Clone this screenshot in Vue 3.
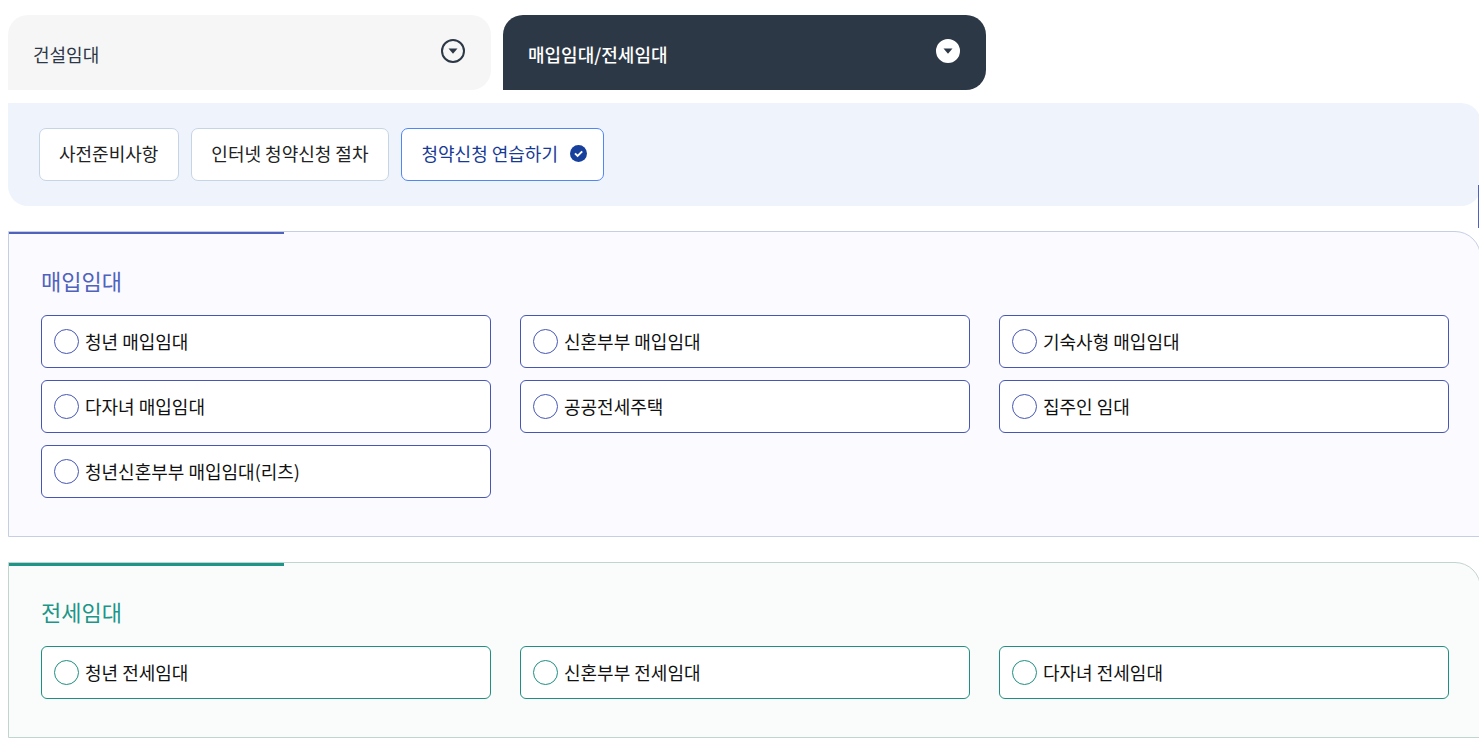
<script setup>
import { ref } from 'vue'

const tabs = [
  { id: 'build', label: '건설임대' },
  { id: 'purchase', label: '매입임대/전세임대' },
]
const activeTab = ref('purchase')

const steps = ['사전준비사항', '인터넷 청약신청 절차', '청약신청 연습하기']
const activeStep = ref(2)

const groups = [
  {
    id: 'purchase',
    title: '매입임대',
    options: [
      '청년 매입임대',
      '신혼부부 매입임대',
      '기숙사형 매입임대',
      '다자녀 매입임대',
      '공공전세주택',
      '집주인 임대',
      '청년신혼부부 매입임대(리츠)',
    ],
  },
  {
    id: 'jeonse',
    title: '전세임대',
    options: ['청년 전세임대', '신혼부부 전세임대', '다자녀 전세임대'],
  },
]
const selected = ref('')
</script>

<template>
  <main class="page">
    <nav class="tabs">
      <button
        v-for="tab in tabs"
        :key="tab.id"
        type="button"
        class="tab"
        :class="{ active: tab.id === activeTab }"
        @click="activeTab = tab.id"
      >
        <span>{{ tab.label }}</span>
        <svg class="arrow" viewBox="0 0 24 24" aria-hidden="true">
          <circle class="ring" cx="12" cy="12" r="11" />
          <path class="tri" d="M7.5 9.5h9L12 14.8z" />
        </svg>
      </button>
    </nav>

    <div class="steps">
      <button
        v-for="(step, i) in steps"
        :key="step"
        type="button"
        class="step"
        :class="{ active: i === activeStep }"
        @click="activeStep = i"
      >
        {{ step }}
        <svg v-if="i === activeStep" class="check" viewBox="0 0 17 17" aria-hidden="true">
          <circle cx="8.5" cy="8.5" r="8.5" />
          <path d="M5 8.4l2.6 2.5L12.2 6.4" />
        </svg>
      </button>
    </div>

    <section v-for="group in groups" :key="group.id" class="panel" :class="group.id">
      <h2 class="title">{{ group.title }}</h2>
      <div class="options">
        <label v-for="option in group.options" :key="option" class="option">
          <input v-model="selected" type="radio" name="housing" :value="option" class="radio" />
          <span>{{ option }}</span>
        </label>
      </div>
    </section>

    <div class="quick" aria-hidden="true"></div>
  </main>
</template>

<style>
body {
  background: #fff;
  overflow-x: hidden;
}
</style>

<style scoped>
.page {
  padding: 15px 0 7px 8px;
  margin-right: -2px;
  font-family: "Noto Sans CJK KR", sans-serif;
  font-size: 18px;
  line-height: 27px;
  color: #111;
}

button {
  font: inherit;
  cursor: pointer;
}

.tabs {
  display: grid;
  grid-template-columns: repeat(3, 1fr);
  gap: 12px;
}

.tab {
  display: flex;
  align-items: center;
  justify-content: space-between;
  height: 75px;
  padding: 4px 26px 0 25px;
  border: 0;
  border-radius: 20px 20px 20px 0;
  background: #f6f6f6;
  color: #2d3846;
  text-align: left;
}

.tab.active {
  background: #2d3846;
  color: #fff;
  font-weight: 500;
}

.arrow {
  width: 24px;
  height: 24px;
  margin-bottom: 8px;
}

.ring {
  fill: none;
  stroke: #2d3846;
  stroke-width: 2;
}

.tri {
  fill: #2d3846;
}

.active .ring {
  fill: #fff;
  stroke: #fff;
}

.steps {
  display: flex;
  gap: 12px;
  margin-top: 13px;
  padding: 25px 31px;
  border-radius: 0 20px 20px 20px;
  background: #eff4fc;
}

.step {
  display: flex;
  align-items: center;
  height: 53px;
  padding: 0 20px 2px 19px;
  border: 1px solid #c6d5e5;
  border-radius: 7px;
  background: #fff;
  color: #222;
}

.step.active {
  padding-right: 16px;
  border-color: #5186f7;
  color: #173a95;
}

.check {
  width: 17px;
  height: 17px;
  margin-left: 12px;
}

.check circle {
  fill: #173f9c;
}

.check path {
  fill: none;
  stroke: #fff;
  stroke-width: 2;
}

.panel {
  position: relative;
  margin-top: 25px;
  padding: 32px 31px 38px 32px;
  border: 1px solid #c5cfe4;
  border-radius: 0 26px 0 0;
  background: #fafaff;
}

.panel::before {
  content: "";
  position: absolute;
  top: 0;
  left: 0;
  width: 275px;
  height: 2px;
  background: #4f62bd;
}

.title {
  margin: 0 0 18px;
  font-size: 22px;
  line-height: 33px;
  font-weight: 400;
  color: #4f62bd;
}

.options {
  display: grid;
  grid-template-columns: repeat(3, 1fr);
  gap: 12px 29px;
}

.option {
  display: flex;
  align-items: center;
  gap: 6px;
  height: 53px;
  box-sizing: border-box;
  padding: 0 12px;
  border: 1px solid #4656b5;
  border-radius: 6px;
  background: #fff;
  cursor: pointer;
}

.radio {
  appearance: none;
  flex: none;
  width: 25px;
  height: 25px;
  margin: 0;
  border: 1px solid #4656b5;
  border-radius: 50%;
  background: #fff;
}

.radio:checked {
  box-shadow: inset 0 0 0 5px #fff;
  background: #4656b5;
}

.jeonse {
  border-color: #c2d4d0;
  background: #fafcfc;
}

.jeonse::before {
  height: 3px;
  background: #1d9688;
}

.jeonse .title {
  color: #1d9688;
}

.jeonse .option,
.jeonse .radio {
  border-color: #1d9080;
}

.jeonse .radio:checked {
  background: #1d9080;
}

.quick {
  position: fixed;
  top: 185px;
  right: 0;
  width: 1px;
  height: 43px;
  background: #4f62bd;
}
</style>
